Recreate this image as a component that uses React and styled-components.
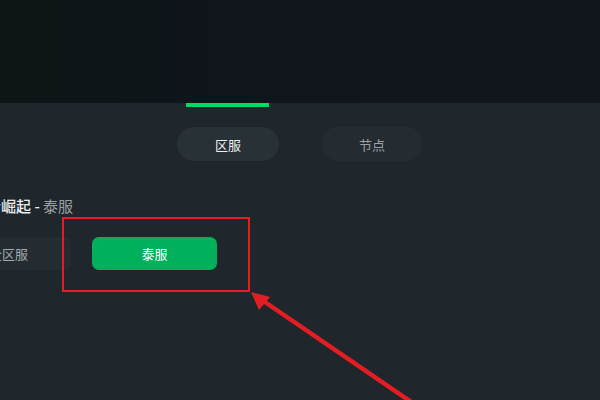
import styled, { createGlobalStyle } from 'styled-components';

const Global = createGlobalStyle`
    html, body {
        margin:0;
        padding:0;
        background:#1f272d;
    }
    body {
        font-family:"Noto Sans CJK SC", "Noto Sans", sans-serif;
    }
`;

const Screen = styled.div`
    position:relative;
    width:600px;
    height:400px;
    overflow:hidden;
    background:#1f272d;
`;

const Hero = styled.div`
    height:103px;
    background:linear-gradient(to right, #0d1515 0%, #0f151b 35%, #10161c 100%);
`;

const Indicator = styled.div`
    width:83px;
    height:4px;
    margin-left:186px;
    background:#00d966;
`;

const Tabs = styled.div`
    display:flex;
    gap:42px;
    margin:20px 0 0 177px;
`;

const Tab = styled.div`
    width:102px;
    height:34px;
    border-radius:17px;
    display:flex;
    align-items:center;
    justify-content:center;
    font-size:13px;
    background:${p => p.active ? '#283136' : '#242c32'};
    color:${p => p.active ? '#eef0f1' : '#9aa1a6'};
`;

const Content = styled.div`
    margin:34px 0 0 -54px;
`;

const Title = styled.h3`
    margin:0 0 20px 25px;
    font-size:15px;
    font-weight:500;
    line-height:22px;
    color:#eceeef;
    white-space:nowrap;

    span {
        font-weight:400;
        color:#9aa0a4;
    }
`;

const Row = styled.div`
    display:flex;
    gap:21px;
`;

const Region = styled.div`
    width:125px;
    height:33px;
    border-radius:7px;
    display:flex;
    align-items:center;
    justify-content:center;
    font-size:13px;
    background:${p => p.selected ? '#00b05a' : '#242c32'};
    color:${p => p.selected ? '#ffffff' : '#a3a9ad'};
`;

const Annotation = styled.svg`
    position:absolute;
    left:0;
    top:0;
    pointer-events:none;
`;

const App = () => {
    return (
        <Screen>
            <Global />
            <Hero />
            <Indicator />
            <Tabs>
                <Tab active>区服</Tab>
                <Tab>节点</Tab>
            </Tabs>
            <Content>
                <Title>王者崛起 - <span>泰服</span></Title>
                <Row>
                    <Region>全区服</Region>
                    <Region selected>泰服</Region>
                </Row>
            </Content>
            <Annotation width="600" height="400" viewBox="0 0 600 400">
                <rect x="63" y="218" width="186" height="73" fill="none" stroke="#e21d24" strokeWidth="2" />
                <line x1="262" y1="300" x2="420" y2="408" stroke="#e21d24" strokeWidth="4.5" />
                <polygon points="251,292 270,297 259,310" fill="#e21d24" />
            </Annotation>
        </Screen>
    )
}

export default App;
